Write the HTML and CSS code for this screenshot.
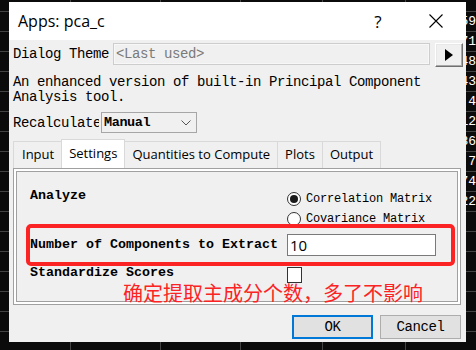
FILE: index.html
```html
<!DOCTYPE html>
<html>
<head>
<meta charset="utf-8">
<title>Apps: pca_c</title>
<link rel="stylesheet" href="styles.css">
</head>
<body>
<div class="cells">
  <div>59</div><div>71</div><div>48</div><div>43</div><div>4</div>
  <div>12</div><div>86</div><div>7</div><div>74</div><div>22</div>
</div>
<div class="dialog">
  <div class="titlebar">
    <span class="title">Apps: pca_c</span>
    <span class="cap-btn">?</span>
    <span class="cap-btn close"><svg width="14" height="14" viewBox="0 0 14 14"><path d="M0.5 0.5L13.5 13.5M13.5 0.5L0.5 13.5" stroke="#000" stroke-width="1.1" fill="none"/></svg></span>
  </div>
  <div class="body">
    <div class="theme-row">
      <span class="lbl">Dialog Theme</span>
      <div class="field">&lt;Last used&gt;</div>
      <div class="arrow-btn"><svg width="8" height="12" viewBox="0 0 8 12"><path d="M0 0L8 6L0 12Z" fill="#000"/></svg></div>
    </div>
    <p class="desc">An enhanced version of built-in Principal Component Analysis tool.</p>
    <div class="recalc-row">
      <span class="clip">Recalculate</span>
      <div class="select"><span class="sel-text">Manual</span><svg width="10" height="6" viewBox="0 0 10 6"><path d="M0.5 0.5L5 5L9.5 0.5" stroke="#555" stroke-width="1" fill="none"/></svg></div>
    </div>
    <div class="tabs">
      <div class="tab">Input</div>
      <div class="tab active">Settings</div>
      <div class="tab">Quantities to Compute</div>
      <div class="tab">Plots</div>
      <div class="tab">Output</div>
    </div>
    <div class="panel">
      <div class="panel-inner">
        <div class="frow row-analyze">
          <div class="flabel">Analyze</div>
          <div class="radios">
            <div class="radio"><span class="circle checked"></span>Correlation Matrix</div>
            <div class="radio"><span class="circle"></span>Covariance Matrix</div>
          </div>
        </div>
        <div class="frow row-num">
          <div class="flabel">Number of Components to Extract</div>
          <div class="input">10</div>
        </div>
        <div class="frow row-std">
          <div class="flabel">Standardize Scores</div>
          <div class="check"></div>
        </div>
      </div>
    </div>
    <div class="buttons">
      <div class="btn default">OK</div>
      <div class="btn">Cancel</div>
    </div>
  </div>
  <div class="annot-box"></div>
  <div class="annot-text">确定提取主成分个数，多了不影响</div>
</div>
</body>
</html>
```
FILE: styles.css
```css
html, body {
  margin: 0;
  padding: 0;
}

body {
  position: relative;
  width: 476px;
  height: 350px;
  overflow: hidden;
  background-color: #0b0b0b;
  background-image:
    linear-gradient(#454545, #454545),
    linear-gradient(#454545, #454545),
    linear-gradient(#454545, #454545),
    linear-gradient(#454545, #454545),
    linear-gradient(#454545, #454545),
    repeating-linear-gradient(to bottom, transparent 0 11px, #444 11px 12px, transparent 12px 20px);
  background-size: 1px 100%, 1px 100%, 1px 100%, 1px 100%, 1px 100%, 100% 100%;
  background-position: 70px 0, 160px 0, 240px 0, 322px 0, 405px 0, 0 0;
  background-repeat: no-repeat;
  font-family: "Liberation Mono", monospace;
  font-size: 14px;
  letter-spacing: -0.4px;
  color: #000;
}

.cells {
  position: absolute;
  right: 0;
  top: 12px;
  width: 40px;
  text-align: right;
  color: #fff;
  font-size: 13px;
  line-height: 20px;
  letter-spacing: 0;
}

.dialog {
  position: absolute;
  left: 9px;
  top: 2px;
  width: 457px;
  height: 340px;
  background: #f0f0f0;
  display: flex;
  flex-direction: column;
}

.titlebar {
  flex: none;
  height: 38px;
  background: #fff;
  display: flex;
  align-items: center;
  padding-left: 9px;
  padding-right: 1px;
}

.title {
  flex: 1;
  font-family: "Open Sans", sans-serif;
  font-size: 16px;
  letter-spacing: 0;
}

.cap-btn {
  width: 58px;
  height: 38px;
  display: flex;
  align-items: center;
  justify-content: center;
  font-family: "Open Sans", sans-serif;
  font-size: 17px;
  letter-spacing: 0;
}

.body {
  flex: 1;
  display: flex;
  flex-direction: column;
  padding: 3px 3px 0 4px;
}

.theme-row {
  display: flex;
  align-items: flex-start;
}

.lbl {
  width: 100px;
  line-height: 22px;
  white-space: nowrap;
}

.field {
  width: 317px;
  height: 22px;
  box-sizing: border-box;
  border: 1px solid #cdcdcd;
  box-shadow: inset 0 0 0 1px #f7f7f7;
  background: #f0f0f0;
  color: #7a7a7a;
  padding-left: 2px;
  line-height: 20px;
}

.arrow-btn {
  margin-left: 5px;
  width: 28px;
  height: 24px;
  box-sizing: border-box;
  border: 1px solid;
  border-color: #fff #707070 #707070 #fff;
  box-shadow: inset -1px -1px 0 #a8a8a8, inset 1px 1px 0 #e8e8e8;
  background: #f0f0f0;
  display: flex;
  align-items: center;
  justify-content: center;
}

.desc {
  margin: 8px 0 0;
  line-height: 15px;
}

.recalc-row {
  margin-top: 7px;
  display: flex;
  align-items: center;
}

.clip {
  width: 86px;
  overflow: hidden;
  white-space: nowrap;
  margin-right: 2px;
}

.select {
  width: 96px;
  height: 21px;
  box-sizing: border-box;
  border: 1px solid #a6a6a6;
  background: #f0f0f0;
  display: flex;
  align-items: center;
  justify-content: space-between;
  padding: 0 5px 0 2px;
}

.sel-text {
  font-weight: bold;
  font-size: 13.5px;
}

.tabs {
  margin-top: 6px;
  height: 29px;
  display: flex;
  align-items: flex-end;
}

.tab {
  height: 27px;
  box-sizing: border-box;
  border: 1px solid #d9d9d9;
  border-bottom: none;
  margin-left: -1px;
  padding: 0 7px;
  background: #f0f0f0;
  font-family: "Open Sans", sans-serif;
  font-size: 13px;
  letter-spacing: 0;
  line-height: 24px;
  white-space: nowrap;
}

.tab:first-child {
  margin-left: 0;
  padding-left: 8px;
}

.tab.active {
  height: 29px;
  background: #fff;
  line-height: 26px;
}

.panel {
  margin-right: 2px;
  border: 1px solid #a0a0a0;
  padding: 2px;
  background: #fff;
}

.panel-inner {
  border: 1px solid #a0a0a0;
  background: #f0f0f0;
  padding: 16px 0 18px 13px;
}

.frow {
  display: flex;
}

.flabel {
  width: 257px;
  flex: none;
  font-weight: bold;
  font-size: 13.33px;
  letter-spacing: 0;
  line-height: 16px;
  white-space: nowrap;
}

.radios {
  margin-top: 1px;
}

.radio {
  height: 20px;
  display: flex;
  align-items: center;
  font-size: 12px;
  letter-spacing: -0.2px;
}

.circle {
  width: 14px;
  height: 14px;
  box-sizing: border-box;
  border: 1px solid #333;
  border-radius: 50%;
  background: #fff;
  margin-right: 5px;
  display: flex;
  align-items: center;
  justify-content: center;
}

.circle.checked::after {
  content: "";
  width: 8px;
  height: 8px;
  border-radius: 50%;
  background: #1a1a1a;
}

.row-num {
  margin-top: 5px;
  align-items: center;
}

.input {
  width: 149px;
  height: 22px;
  box-sizing: border-box;
  border: 1px solid #7a7a7a;
  background: #fff;
  padding-left: 2px;
  font-family: "Open Sans", sans-serif;
  font-size: 15px;
  letter-spacing: 0;
  line-height: 20px;
}

.row-std {
  margin-top: 10px;
}

.row-std .flabel {
  line-height: 14px;
}

.check {
  margin-top: 1px;
  width: 15px;
  height: 16px;
  box-sizing: border-box;
  border: 1px solid #333;
  background: #fff;
}

.buttons {
  margin-top: 10px;
  display: flex;
  justify-content: flex-end;
  gap: 7px;
  padding-right: 2px;
}

.btn {
  width: 81px;
  height: 24px;
  box-sizing: border-box;
  border: 1px solid #adadad;
  background: #e1e1e1;
  display: flex;
  align-items: center;
  justify-content: center;
}

.btn.default {
  border: 2px solid #0078d7;
}

.annot-box {
  position: absolute;
  left: 17px;
  top: 222px;
  width: 429px;
  height: 42px;
  box-sizing: border-box;
  border: 4px solid #fb2323;
  border-radius: 5px;
}

.annot-text {
  position: absolute;
  left: 114px;
  top: 279px;
  font-family: "Noto Sans CJK SC", sans-serif;
  font-size: 20px;
  line-height: 24px;
  letter-spacing: 0;
  color: #fb2323;
  white-space: nowrap;
}
```
